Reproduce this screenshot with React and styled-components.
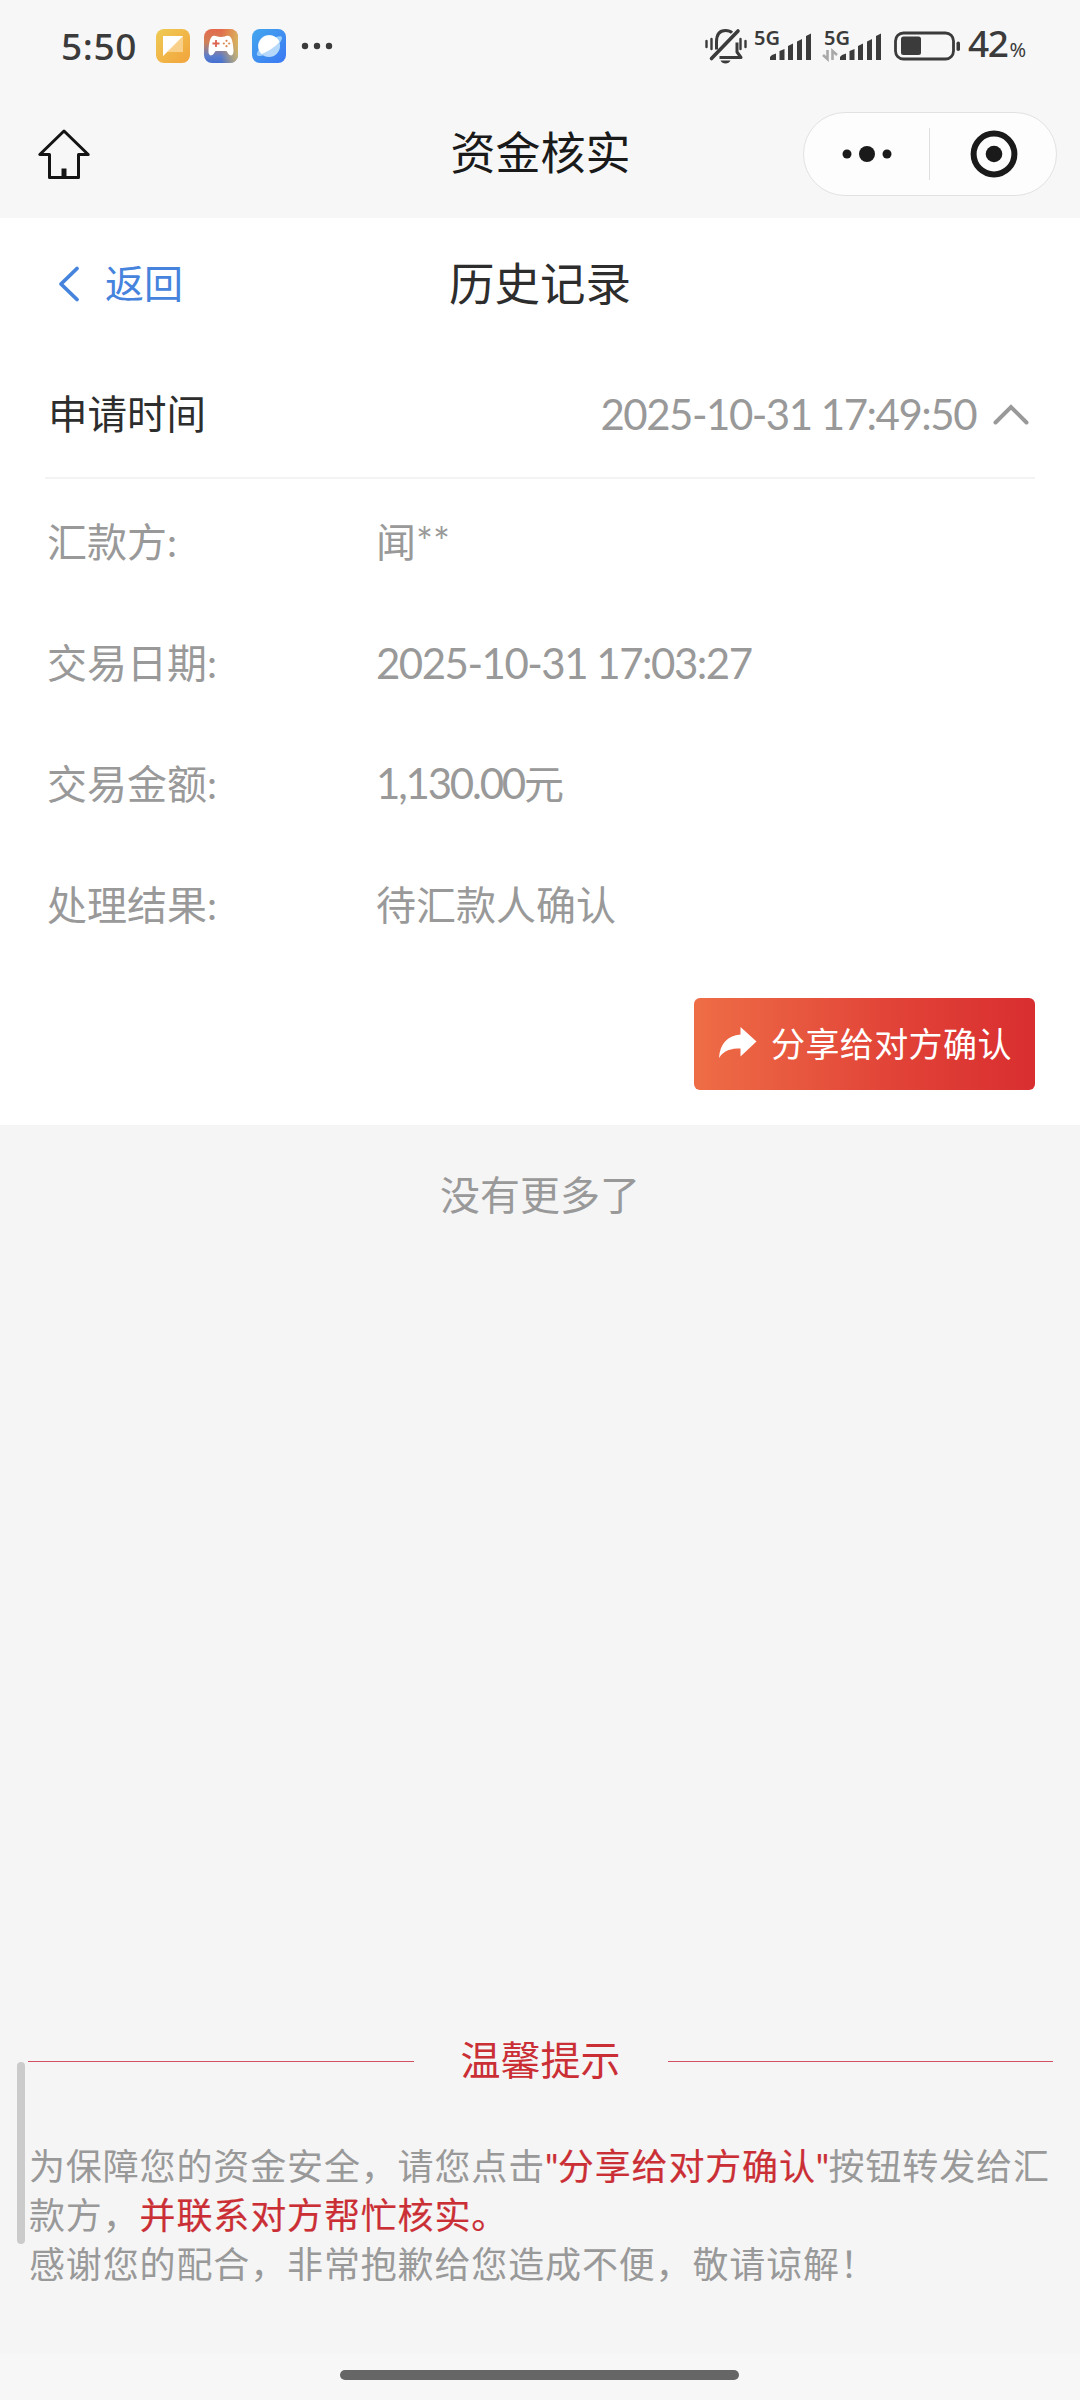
import React, { useState } from "react";
import styled, { createGlobalStyle } from "styled-components";

const GlobalStyle = createGlobalStyle`
  * {
    box-sizing: border-box;
  }
  body {
    margin: 0;
    background: #f5f5f5;
    font-family: Lato, "Noto Sans CJK SC", sans-serif;
  }
  svg {
    display: block;
    flex: none;
    overflow: visible;
  }
`;

const Page = styled.div`
  position: relative;
  display: flex;
  flex-direction: column;
  width: 1080px;
  height: 2400px;
  background: #f5f5f5;
  overflow: hidden;
`;

const Header = styled.header`
  height: 218px;
  background: #f7f7f7;
`;

const StatusBar = styled.div`
  display: flex;
  justify-content: space-between;
  align-items: center;
  height: 92px;
  padding: 0 54px 0 61px;
  color: #3b3b3b;
`;

const StatusGroup = styled.div`
  display: flex;
  align-items: center;
`;

const Clock = styled.span`
  width: 95px;
  font: 500 37px/40px "Noto Sans", sans-serif;
  letter-spacing: 0.6px;
  white-space: nowrap;
`;

const AppIcons = styled.div`
  display: flex;
  align-items: center;
  gap: 14px;
`;

const DotsWrap = styled.div`
  margin-left: 15px;
`;

const Battery = styled.div`
  display: flex;
  align-items: baseline;
  margin-left: 7px;
  font: 500 37px/40px "Noto Sans", sans-serif;
  letter-spacing: -1.5px;

  small {
    font-size: 20px;
    font-weight: 400;
    letter-spacing: 0;
    margin-left: 2px;
  }
`;

const NavBar = styled.div`
  display: grid;
  grid-template-columns: 277px 1fr 277px;
  align-items: center;
  height: 124px;
  padding: 0 23px 0 0;
`;

const HomeButton = styled.button`
  width: 52px;
  margin-left: 38px;
  padding: 0;
  border: 0;
  background: none;
`;

const NavTitle = styled.h1`
  margin: -2px 0 0;
  padding-left: 24px;
  color: #1a1a1a;
  font-size: 45px;
  font-weight: 400;
  line-height: 60px;
  text-align: center;
`;

const Capsule = styled.div`
  display: flex;
  align-items: center;
  justify-self: end;
  width: 254px;
  height: 84px;
  border: 1px solid #e2e2e2;
  border-radius: 42px;
  background: #fdfdfd;
`;

const CapsuleButton = styled.div`
  display: flex;
  flex: 1;
  align-items: center;
  justify-content: center;
  height: 52px;
  padding-left: ${(p) => (p.$right ? "3px" : "1px")};
  border-left: ${(p) => (p.$right ? "1px solid #dedede" : "0")};
`;

const Content = styled.main`
  height: 907px;
  padding: 0 45px;
  background: #fff;
`;

const TitleBar = styled.div`
  display: grid;
  grid-template-columns: 1fr auto 1fr;
  align-items: center;
  height: 132px;
`;

const Back = styled.div`
  display: flex;
  align-items: center;
  gap: 25px;
  padding-left: 13px;
  color: #4583dd;
  font-size: 39px;
  line-height: 56px;

  span {
    margin-top: -2px;
  }
`;

const Title = styled.h2`
  margin: 0;
  color: #2d2d2d;
  font-size: 45.5px;
  font-weight: 400;
  line-height: 60px;
`;

const RecordHeader = styled.div`
  display: flex;
  align-items: center;
  height: 129px;
  padding: 0 6px 0 3px;
  border-bottom: 2px solid #f3f3f3;
  color: #2d2d2d;
  font-size: 39.5px;
  line-height: 56px;
  cursor: pointer;
`;

const Numeric = styled.span`
  color: #999;
  font-size: 42px;
  letter-spacing: ${(p) => p.$spacing || "-1.5px"};
  white-space: nowrap;
`;

const RecordTime = styled.div`
  display: flex;
  align-items: center;
  gap: 17px;
  margin-left: auto;
`;

const Rows = styled.div`
  padding-top: 2px;
`;

const Row = styled.div`
  display: grid;
  grid-template-columns: 329px 1fr;
  align-items: center;
  height: 121px;
  padding-left: 2px;
  color: #999;
  font-size: 40px;
  line-height: 56px;
`;

const Actions = styled.div`
  display: flex;
  justify-content: flex-end;
  padding-top: 33px;
`;

const ShareButton = styled.button`
  display: flex;
  align-items: center;
  gap: 14px;
  width: 341px;
  height: 92px;
  padding: 0 0 4px 25px;
  border: 0;
  border-radius: 6px;
  background: linear-gradient(90deg, #ee6d46, #e14237 60%, #d92e30);
  color: #fff;
  font-family: inherit;
  font-size: 34px;
  letter-spacing: 0.4px;
  white-space: nowrap;
`;

const NoMore = styled.div`
  padding-top: 40px;
  color: #999;
  font-size: 40px;
  line-height: 60px;
  text-align: center;
`;

const Notice = styled.section`
  margin-top: auto;
  padding: 0 27px 0 28px;
  height: 324px;
`;

const NoticeTitle = styled.h3`
  display: flex;
  align-items: center;
  gap: 47px;
  margin: 0 0 52px;
  color: #cb2f36;
  font-size: 40px;
  font-weight: 400;
  line-height: 60px;
  white-space: nowrap;

  &::before,
  &::after {
    content: "";
    flex: 1;
    height: 1px;
    margin-top: 2px;
    background: #d34f62;
  }
`;

const NoticeText = styled.p`
  margin: 0;
  padding-left: 1px;
  color: #999;
  font-size: 36px;
  letter-spacing: 0.86px;
  line-height: 49px;
  white-space: nowrap;
`;

const Highlight = styled.span`
  color: #cb2f36;
  -webkit-text-stroke: 0.2px #cb2f36;
`;

const Quote = styled.span`
  letter-spacing: -0.6px;
`;

const ScrollThumb = styled.div`
  position: absolute;
  left: 17px;
  top: 2062px;
  width: 8px;
  height: 182px;
  border-radius: 4px;
  background: #cbcbcb;
`;

const GestureArea = styled.footer`
  display: flex;
  justify-content: center;
  height: 46px;
  padding: 16px 1px 0 0;
  background: #f7f7f7;
`;

const GestureBar = styled.div`
  width: 399px;
  height: 10px;
  border-radius: 5px;
  background: #666;
`;

const NotesIcon = () => (
  <svg width="34" height="34" viewBox="0 0 34 34">
    <defs>
      <linearGradient id="notes" x1="0" y1="0" x2="1" y2="1">
        <stop offset="0" stopColor="#efcb55" />
        <stop offset="1" stopColor="#f2a33c" />
      </linearGradient>
    </defs>
    <rect width="34" height="34" rx="8" fill="url(#notes)" />
    <path d="M7 7h20v16H11l-4 4z" fill="#fbd9a0" opacity=".75" />
    <path d="M7 7h20L7 27z" fill="#fff" />
  </svg>
);

const GameIcon = () => (
  <svg width="34" height="34" viewBox="0 0 34 34">
    <defs>
      <linearGradient id="game" x1="0" y1="0" x2="0" y2="1">
        <stop offset="0" stopColor="#e4694c" />
        <stop offset=".4" stopColor="#cf8158" />
        <stop offset=".8" stopColor="#5b7dcb" />
        <stop offset="1" stopColor="#456fd0" />
      </linearGradient>
      <linearGradient id="gameSide" x1="0" y1="0" x2="1" y2="0">
        <stop offset=".5" stopColor="#e9b14a" stopOpacity="0" />
        <stop offset="1" stopColor="#d9bd62" stopOpacity=".85" />
      </linearGradient>
    </defs>
    <rect width="34" height="34" rx="8" fill="url(#game)" />
    <rect width="34" height="34" rx="8" fill="url(#gameSide)" />
    <path
      d="M9 7c3-1 4 1 8 1s5-2 8-1c3 1 4 7 4.500 14 .3 5-2 7-5 4l-2-3h-11l-2 3c-3 3-5.500 1-5-4C5 14 6 8 9 7z"
      fill="#fff"
    />
    <path d="M8.500 14.500h7M12 11v7" stroke="#dc6450" strokeWidth="1.800" />
    <g fill="#dc8650">
      <circle cx="22.500" cy="11.800" r="1.100" />
      <circle cx="22.500" cy="17.200" r="1.100" />
      <circle cx="19.800" cy="14.500" r="1.100" />
      <circle cx="25.200" cy="14.500" r="1.100" />
    </g>
  </svg>
);

const BrowserIcon = () => (
  <svg width="34" height="34" viewBox="0 0 34 34">
    <defs>
      <linearGradient id="browser" x1="0" y1="0" x2="1" y2="1">
        <stop offset="0" stopColor="#43a7ee" />
        <stop offset="1" stopColor="#3b78f3" />
      </linearGradient>
    </defs>
    <rect width="34" height="34" rx="8" fill="url(#browser)" />
    <path
      d="M5 26c-1-2 2-6 6-10L24 8c4-1 6-1 6 1 0 4-9 12-16 16-4 2-8 3-9 1z"
      fill="#9bcdfb"
    />
    <circle cx="17" cy="17" r="11" fill="#b6d9fb" />
    <path d="M9.500 25A11 11 0 1 1 27.500 13C23 18 16 22.500 9.500 25z" fill="#fff" />
  </svg>
);

const MoreDots = () => (
  <svg width="32" height="8" viewBox="0 0 32 8" fill="#3b3b3b">
    <circle cx="4" cy="4" r="3.200" />
    <circle cx="16" cy="4" r="3.200" />
    <circle cx="28" cy="4" r="3.200" />
  </svg>
);

const MuteIcon = () => (
  <svg width="42" height="36" viewBox="0 0 42 36" fill="none" stroke="#3b3b3b">
    <path
      d="M11.500 21.500V14C11.500 6 15 2.500 20.500 2.500c3 0 5 .7 6.500 2.300"
      strokeWidth="3"
    />
    <path
      d="M14.500 29.500H36l-4-5.500v-9.500"
      strokeWidth="3"
      strokeLinejoin="round"
    />
    <path d="M6.500 30.500 33 3" strokeWidth="3.600" strokeLinecap="round" />
    <path d="M15.500 32.500h10c-1.500 4-8.500 4-10 0z" fill="#3b3b3b" stroke="none" />
    <path
      d="M1.500 13v6M6.500 11v10M35.500 11v10M40.500 13v6"
      strokeWidth="2.400"
      strokeLinecap="round"
    />
  </svg>
);

const SignalWrap = styled.div`
  display: flex;
  margin-left: ${(p) => (p.$first ? "6px" : "0")};
`;

const Signal = ({ first, active }) => (
  <SignalWrap $first={first}>
    <svg width="70" height="34" viewBox="0 0 70 34" fill="#3b3b3b">
      <text
        x="1"
        y="15.500"
        fontFamily="Noto Sans, sans-serif"
        fontSize="20"
        fontWeight="600"
      >
        5G
      </text>
      <path d="M17 31v-3l2-2 4-1.500v6.500zM26.500 31V22l5-2v11zM35 31V17l5-2.500V31zM44 31V12.500l5-2.500v21zM53 31V7l5-2.500V31z" />
      {active && (
        <g fill="none" stroke="#a9a9a9" strokeWidth="2.600">
          <path d="M4.500 21v9L0 26M9.500 31v-9l4.500 4" />
        </g>
      )}
    </svg>
  </SignalWrap>
);

const BatteryIcon = () => (
  <svg width="68" height="30" viewBox="-1 0 68 30">
    <rect
      x="1.500"
      y="2"
      width="58"
      height="26"
      rx="8"
      fill="none"
      stroke="#3b3b3b"
      strokeWidth="2.800"
    />
    <rect x="7" y="5.500" width="20" height="18.500" rx="2.500" fill="#3b3b3b" />
    <rect x="62.500" y="10.500" width="3.500" height="9.500" rx="1.700" fill="#3b3b3b" />
  </svg>
);

const HomeIcon = () => (
  <svg
    width="52"
    height="52"
    viewBox="0 0 52 52"
    fill="none"
    stroke="#141414"
    strokeWidth="3"
    strokeLinejoin="round"
  >
    <path d="M26 3 1.800 26.500h9.700V49.500h29V26.500h9.700z" />
    <path d="M26 40.500v9" strokeWidth="5" />
  </svg>
);

const DotsIcon = () => (
  <svg width="50" height="16" viewBox="0 0 50 16" fill="#1a1a1a">
    <circle cx="5" cy="8" r="4.500" />
    <circle cx="25" cy="8" r="8" />
    <circle cx="45" cy="8" r="4.500" />
  </svg>
);

const TargetIcon = () => (
  <svg width="48" height="48" viewBox="0 0 48 48">
    <circle cx="24" cy="24" r="20.400" fill="none" stroke="#1a1a1a" strokeWidth="6" />
    <circle cx="24" cy="24" r="8.300" fill="#1a1a1a" />
  </svg>
);

const BackIcon = () => (
  <svg width="22" height="38" viewBox="0 0 22 38">
    <path
      d="M19 3.500 3 19l16 15.500"
      fill="none"
      stroke="currentColor"
      strokeWidth="3.800"
      strokeLinecap="round"
      strokeLinejoin="round"
    />
  </svg>
);

const ArrowIcon = ({ open }) => (
  <svg
    width="36"
    height="22"
    viewBox="0 0 36 22"
    transform={open ? undefined : "rotate(180)"}
  >
    <path
      d="M2.500 19.500 18 4l15.500 15.500"
      fill="none"
      stroke="#999"
      strokeWidth="4"
      strokeLinecap="round"
    />
  </svg>
);

const ShareIcon = () => (
  <svg width="38" height="31" viewBox="0 0 38 31">
    <path
      d="M21.500 0 37.500 14.500 21.500 29.500v-8C12 21.500 5 23 0 31 1 17 8 8.500 21.500 7.500z"
      fill="#fff"
    />
  </svg>
);

const App = () => {
  const [open, setOpen] = useState(true);

  return (
    <Page>
      <GlobalStyle />
      <Header>
        <StatusBar>
          <StatusGroup>
            <Clock>5:50</Clock>
            <AppIcons>
              <NotesIcon />
              <GameIcon />
              <BrowserIcon />
            </AppIcons>
            <DotsWrap>
              <MoreDots />
            </DotsWrap>
          </StatusGroup>
          <StatusGroup>
            <MuteIcon />
            <Signal first />
            <Signal active />
            <BatteryIcon />
            <Battery>
              42<small>%</small>
            </Battery>
          </StatusGroup>
        </StatusBar>
        <NavBar>
          <HomeButton>
            <HomeIcon />
          </HomeButton>
          <NavTitle>资金核实</NavTitle>
          <Capsule>
            <CapsuleButton>
              <DotsIcon />
            </CapsuleButton>
            <CapsuleButton $right>
              <TargetIcon />
            </CapsuleButton>
          </Capsule>
        </NavBar>
      </Header>

      <Content>
        <TitleBar>
          <Back>
            <BackIcon />
            <span>返回</span>
          </Back>
          <Title>历史记录</Title>
        </TitleBar>
        <RecordHeader onClick={() => setOpen(!open)}>
          申请时间
          <RecordTime>
            <Numeric>2025-10-31 17:49:50</Numeric>
            <ArrowIcon open={open} />
          </RecordTime>
        </RecordHeader>
        {open && (
          <Rows>
            <Row>
              <span>汇款方:</span>
              <span>闻**</span>
            </Row>
            <Row>
              <span>交易日期:</span>
              <Numeric>2025-10-31 17:03:27</Numeric>
            </Row>
            <Row>
              <span>交易金额:</span>
              <span>
                <Numeric $spacing="-2.2px">1,130.00</Numeric>元
              </span>
            </Row>
            <Row>
              <span>处理结果:</span>
              <span>待汇款人确认</span>
            </Row>
          </Rows>
        )}
        <Actions>
          <ShareButton>
            <ShareIcon />
            分享给对方确认
          </ShareButton>
        </Actions>
      </Content>

      <NoMore>没有更多了</NoMore>

      <Notice>
        <NoticeTitle>温馨提示</NoticeTitle>
        <NoticeText>
          为保障您的资金安全，请您点击
          <Highlight>
            <Quote>"</Quote>分享给对方确认<Quote>"</Quote>
          </Highlight>
          按钮转发给汇
          <br />
          款方，<Highlight>并联系对方帮忙核实。</Highlight>
          <br />
          感谢您的配合，非常抱歉给您造成不便，敬请谅解！
        </NoticeText>
      </Notice>
      <ScrollThumb />
      <GestureArea>
        <GestureBar />
      </GestureArea>
    </Page>
  );
};

export default App;
